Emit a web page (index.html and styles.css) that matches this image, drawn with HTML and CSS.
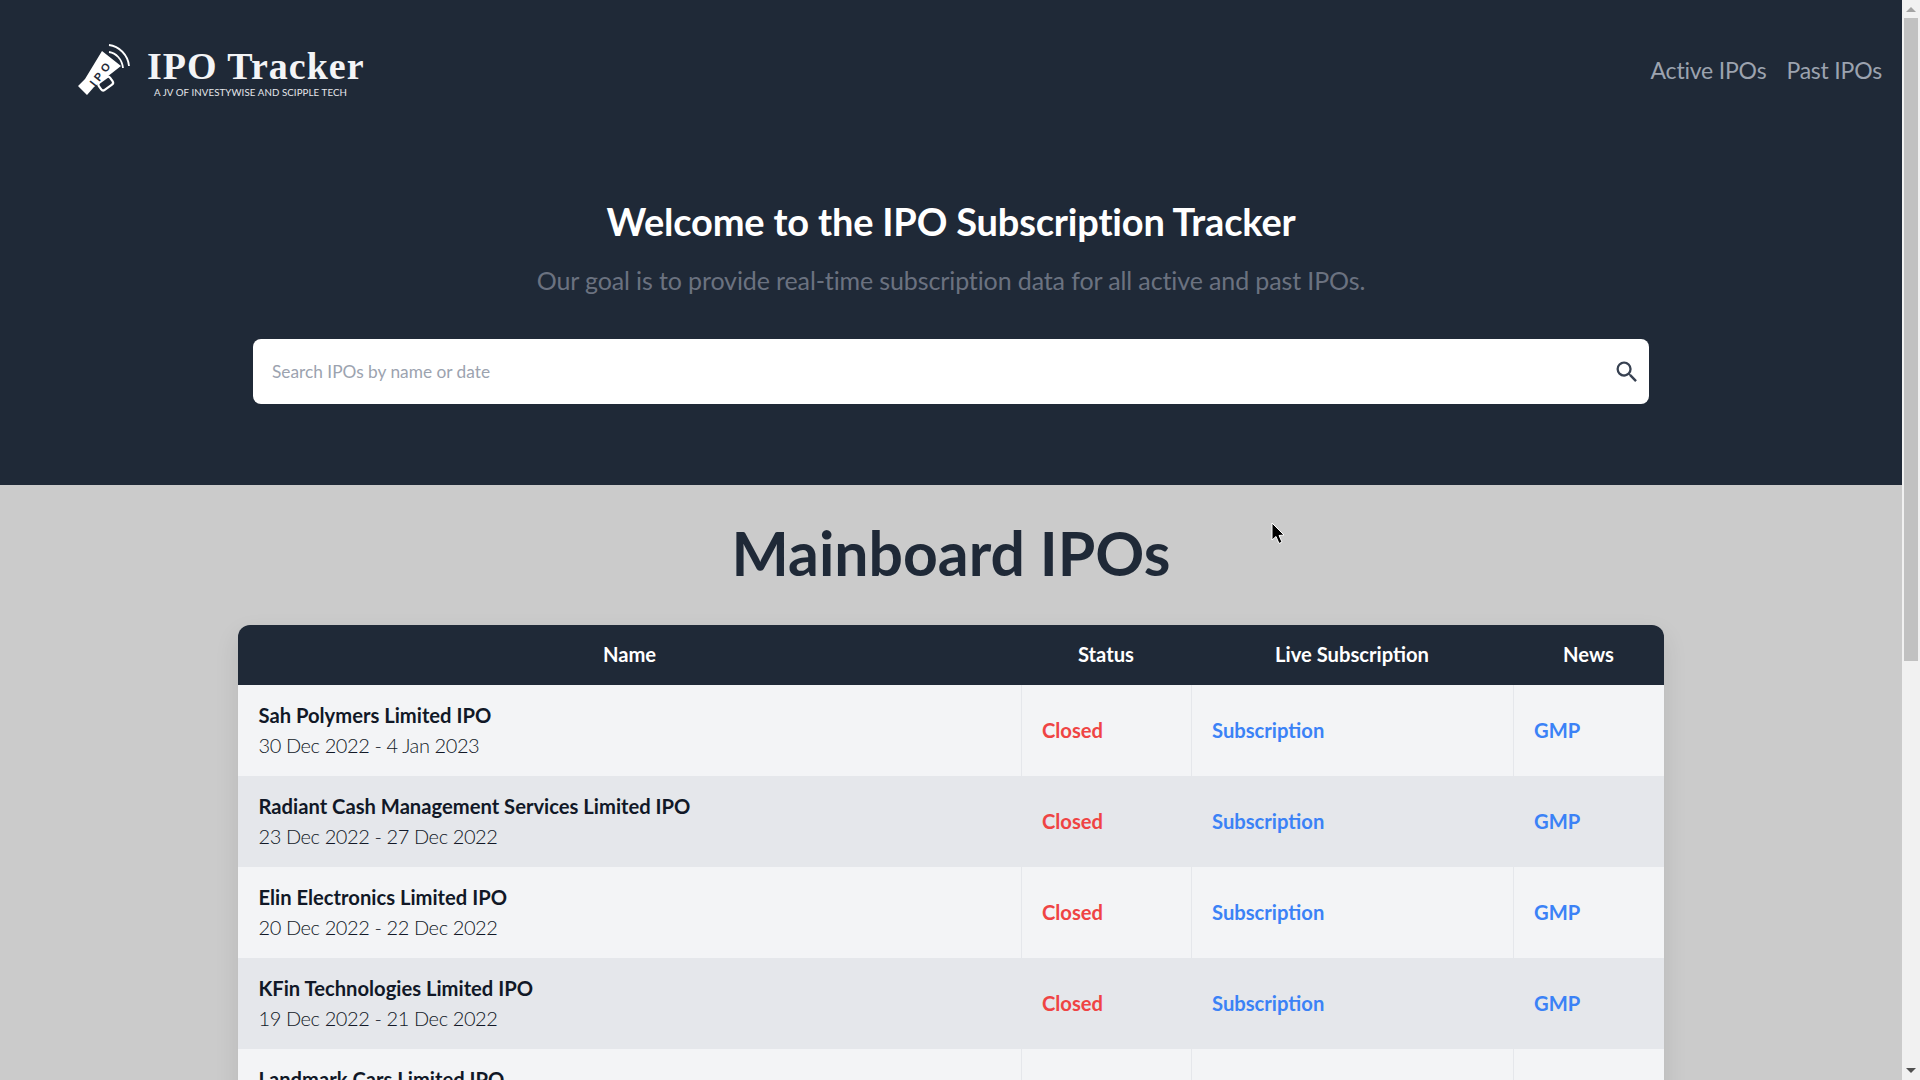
FILE: index.html
```html
<!DOCTYPE html>
<html lang="en">
<head>
<meta charset="utf-8">
<title>IPO Tracker</title>
<link rel="stylesheet" href="styles.css">
</head>
<body>
<div class="page">
  <header class="hero">
    <nav class="topbar">
      <a class="brand" href="#">
        <svg class="brand-icon" viewBox="0 0 80 70" width="80" height="70" aria-hidden="true">
          <path d="M42 16 L61 31 L34 52 L27 60 L18 51 L25 44 Z" fill="#fff"/>
          <rect x="39" y="44" width="14" height="9" rx="2.5" transform="rotate(-36 46 49)" fill="#1f2937" stroke="#fff" stroke-width="2.2"/>
          <text class="brand-icon-text" x="0" y="0" transform="translate(41 38) rotate(-52)">IPO</text>
          <path d="M49 10 C59 11 68 20 69 31" fill="none" stroke="#fff" stroke-width="1.8"/>
          <path d="M49 17 C56 18 62 24 63 33" fill="none" stroke="#fff" stroke-width="1.8"/>
        </svg>
        <span class="brand-text">
          <span class="brand-name">IPO Tracker</span>
          <span class="brand-sub">A JV OF INVESTYWISE AND SCIPPLE TECH</span>
        </span>
      </a>
      <div class="nav-links">
        <a href="#">Active IPOs</a>
        <a href="#">Past IPOs</a>
      </div>
    </nav>
    <div class="intro">
      <h1>Welcome to the IPO Subscription Tracker</h1>
      <p>Our goal is to provide real-time subscription data for all active and past IPOs.</p>
      <div class="search">
        <span class="search-placeholder">Search IPOs by name or date</span>
        <svg class="search-icon" viewBox="0 0 24 24" width="28" height="28" aria-hidden="true">
          <path d="M15.5 14h-.79l-.28-.27A6.47 6.47 0 0 0 16 9.5 6.5 6.5 0 1 0 9.5 16c1.61 0 3.09-.59 4.23-1.57l.27.28v.79l5 4.99L20.49 19l-4.99-5zm-6 0C7.01 14 5 11.99 5 9.5S7.01 5 9.5 5 14 7.01 14 9.5 11.99 14 9.5 14z" fill="#374151"/>
        </svg>
      </div>
    </div>
  </header>
  <main class="content">
    <h2>Mainboard IPOs</h2>
    <div class="table-card">
      <table>
        <colgroup>
          <col class="col-name"><col class="col-status"><col class="col-live"><col class="col-news">
        </colgroup>
        <thead>
          <tr><th>Name</th><th>Status</th><th>Live Subscription</th><th>News</th></tr>
        </thead>
        <tbody>
          <tr>
            <td><div class="ipo-name">Sah Polymers Limited IPO</div><div class="ipo-date">30 Dec 2022 - 4 Jan 2023</div></td>
            <td class="closed">Closed</td><td><a href="#">Subscription</a></td><td><a href="#">GMP</a></td>
          </tr>
          <tr>
            <td><div class="ipo-name">Radiant Cash Management Services Limited IPO</div><div class="ipo-date">23 Dec 2022 - 27 Dec 2022</div></td>
            <td class="closed">Closed</td><td><a href="#">Subscription</a></td><td><a href="#">GMP</a></td>
          </tr>
          <tr>
            <td><div class="ipo-name">Elin Electronics Limited IPO</div><div class="ipo-date">20 Dec 2022 - 22 Dec 2022</div></td>
            <td class="closed">Closed</td><td><a href="#">Subscription</a></td><td><a href="#">GMP</a></td>
          </tr>
          <tr>
            <td><div class="ipo-name">KFin Technologies Limited IPO</div><div class="ipo-date">19 Dec 2022 - 21 Dec 2022</div></td>
            <td class="closed">Closed</td><td><a href="#">Subscription</a></td><td><a href="#">GMP</a></td>
          </tr>
          <tr>
            <td><div class="ipo-name">Landmark Cars Limited IPO</div><div class="ipo-date">13 Dec 2022 - 15 Dec 2022</div></td>
            <td class="closed">Closed</td><td><a href="#">Subscription</a></td><td><a href="#">GMP</a></td>
          </tr>
        </tbody>
      </table>
    </div>
  </main>
</div>
<aside class="scrollbar" aria-hidden="true">
  <span class="arrow-up"></span>
  <span class="thumb"></span>
  <span class="arrow-down"></span>
</aside>
<svg class="cursor" viewBox="0 0 16 24" width="16" height="24" aria-hidden="true">
  <path d="M1 1 L1 18 L5 14.5 L8 21.5 L11 20 L8 13.5 L13 13 Z" fill="#000" stroke="#fff" stroke-width="1"/>
</svg>
</body>
</html>
```
FILE: styles.css
```css
* { box-sizing: border-box; }
html, body { margin: 0; height: 100%; overflow: hidden; }
body {
  display: flex;
  font-family: Lato, "Noto Sans", sans-serif;
  background: #cbcbcb;
}
a { text-decoration: none; }

.page { flex: 1; min-width: 0; height: 100vh; overflow: hidden; }

.hero { background: #1f2937; height: 485px; }

.topbar {
  display: flex;
  align-items: center;
  justify-content: space-between;
  height: 140px;
  padding: 0 20px 0 60px;
}
.brand { display: flex; align-items: center; gap: 7px; color: #fff; }
.brand-icon { display: block; flex: none; }
.brand-icon-text {
  font-family: "Liberation Sans", sans-serif;
  font-size: 11px;
  font-weight: 700;
  letter-spacing: 3.5px;
  fill: #1f2937;
  text-anchor: middle;
  dominant-baseline: central;
}
.brand-text {
  display: flex;
  flex-direction: column;
  align-items: flex-start;
  padding-top: 4px;
}
.brand-name {
  font-family: "Liberation Serif", serif;
  font-weight: 700;
  font-size: 38px;
  line-height: 40px;
  letter-spacing: 1px;
  color: #f3f4f6;
}
.brand-sub {
  padding-left: 7px;
  font-size: 9.7px;
  line-height: 12px;
  color: #e5e7eb;
  letter-spacing: 0.1px;
}
.nav-links { display: flex; gap: 20px; }
.nav-links a { font-size: 23px; line-height: 32px; letter-spacing: -0.2px; color: #9ca3af; }

.intro { display: flex; flex-direction: column; align-items: center; }
.intro h1 {
  margin: 57px 0 0;
  font-size: 38px;
  line-height: 48px;
  letter-spacing: -0.19px;
  font-weight: 700;
  color: #fff;
}
.intro p {
  margin: 19px 0 0;
  font-size: 25px;
  line-height: 32px;
  letter-spacing: -0.12px;
  color: #6b7280;
}
.search {
  display: flex;
  align-items: center;
  justify-content: space-between;
  width: 1396px;
  height: 65px;
  margin-top: 43px;
  padding: 0 8px 0 19px;
  background: #fff;
  border-radius: 8px;
}
.search-placeholder { font-size: 17.3px; padding-bottom: 1px; color: #9ca3af; }
.search-icon { display: block; }

.content h2 {
  margin: 33px 0 0;
  text-align: center;
  font-size: 60.7px;
  line-height: 70px;
  font-weight: 700;
  color: #1f2937;
}
.table-card {
  width: 1426px;
  margin: 37px auto 0;
  border-radius: 12px 12px 0 0;
  overflow: hidden;
  box-shadow: 0 10px 25px rgba(0, 0, 0, 0.1);
}
table { width: 100%; border-collapse: collapse; table-layout: fixed; }
.col-name { width: 783px; }
.col-status { width: 170px; }
.col-live { width: 322px; }
.col-news { width: 151px; }
th {
  height: 60px;
  padding: 0 20px 2px;
  background: #1f2937;
  color: #fff;
  font-size: 20.2px;
  font-weight: 700;
  text-align: center;
}
td {
  height: 91px;
  padding: 0 20px 2px 20.5px;
  font-size: 20.2px;
  font-weight: 600;
  border-right: 1px solid #e5e7eb;
}
td:last-child { border-right: 0; }
tbody tr:nth-child(odd) td { background: #f3f4f6; }
tbody tr:nth-child(even) td { background: #e5e7eb; }
.ipo-name { font-weight: 700; line-height: 30px; color: #111827; }
.ipo-date {
  font-size: 20px;
  font-weight: 300;
  line-height: 30px;
  letter-spacing: -0.4px;
  color: #111827;
}
.closed { color: #ef4444; font-weight: 700; }
td a { color: #3b82f6; font-weight: 700; }

.scrollbar {
  position: relative;
  flex: none;
  width: 18px;
  height: 100vh;
  background: #f1f1f1;
}
.thumb {
  position: absolute;
  top: 18px;
  left: 2px;
  width: 14px;
  height: 643px;
  background: #c1c1c1;
}
.arrow-up, .arrow-down {
  position: absolute;
  left: 4px;
  width: 0;
  height: 0;
  border-left: 5px solid transparent;
  border-right: 5px solid transparent;
}
.arrow-up { top: 7px; border-bottom: 5px solid #a3a3a3; }
.arrow-down { bottom: 7px; border-top: 5px solid #505050; }

.cursor { position: absolute; left: 1271px; top: 522px; }
```
